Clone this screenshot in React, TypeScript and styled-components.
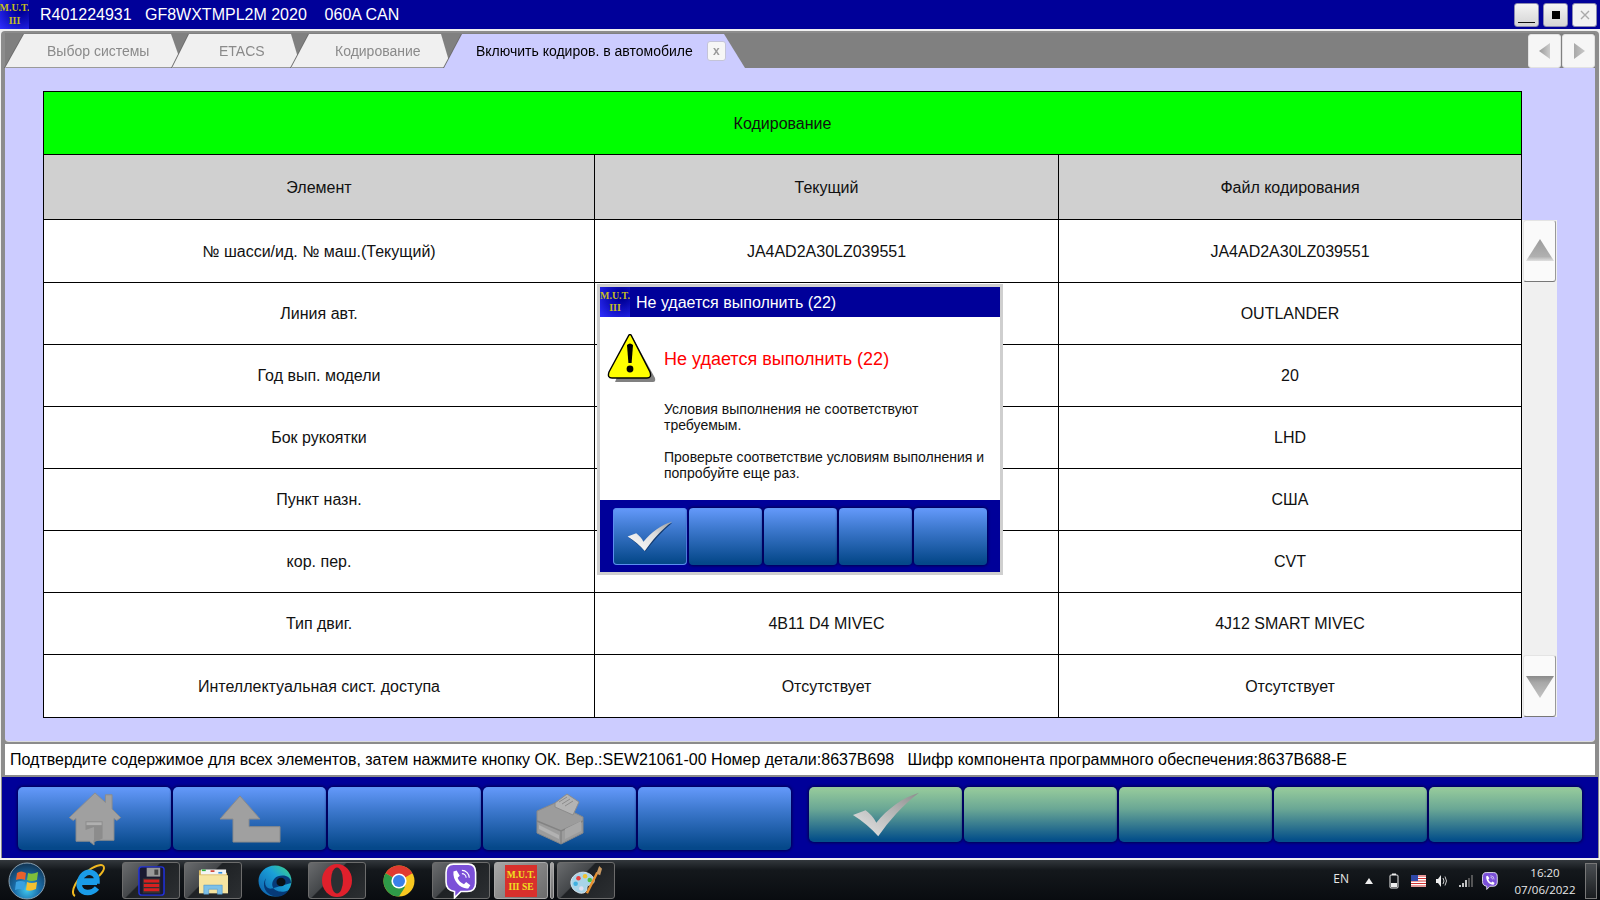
import React from "react";
import styled, { createGlobalStyle } from "styled-components";

const Global = createGlobalStyle`
  html, body { margin: 0; padding: 0; background: #f0f0f0; }
  body { font-family: "Liberation Sans", Arial, sans-serif; overflow: hidden; }
  * { box-sizing: border-box; }
`;

const Page = styled.div`
  position: relative;
  width: 1600px;
  height: 900px;
  display: flex;
  flex-direction: column;
  overflow: hidden;
  background: #f0f0f0;
`;

const TitleBar = styled.header`
  height: 29px;
  flex: none;
  display: flex;
  align-items: center;
  background: #000099;
  color: #fff;
  font-size: 16px;
  padding-right: 3px;
`;
const LogoBox = styled.div<{ $w: number; $h: number; $fs: number }>`
  width: ${(p) => p.$w}px;
  height: ${(p) => p.$h}px;
  flex: none;
  display: flex;
  flex-direction: column;
  align-items: center;
  justify-content: center;
  background: radial-gradient(circle at 72% 30%, #000099 15%, #1414c8 55%, #3030ff 100%);
  color: #c4bc22;
  font-family: "Liberation Serif", serif;
  font-weight: 700;
  font-size: ${(p) => p.$fs}px;
  line-height: 1.25;
  white-space: nowrap;
  overflow: hidden;
`;
const TitleText = styled.span`
  margin-left: 11px;
  white-space: pre;
`;
const WindowButtons = styled.div`
  margin-left: auto;
  display: flex;
  gap: 4px;
  padding-top: 1px;
`;
const WindowButton = styled.div<{ $dim?: boolean }>`
  width: 25px;
  height: 24px;
  border-radius: 3px;
  border: 1px solid #8a8ab0;
  background: ${(p) => (p.$dim ? "#f2f2f2" : "linear-gradient(#f4f4f4, #d4d4d4)")};
  display: flex;
  align-items: center;
  justify-content: center;
`;
const MinGlyph = styled.div`
  width: 17px;
  height: 1px;
  margin-top: 15px;
  background: #111;
`;
const MaxGlyph = styled.div`
  width: 8px;
  height: 8px;
  background: #000;
`;

const Frame = styled.div`
  flex: 1;
  min-height: 0;
  margin: 2px 1px 0;
  padding-top: 2px;
  display: flex;
  flex-direction: column;
  border-radius: 4px 4px 0 0;
  background: #8c8c8c;
`;
const Panel = styled.div`
  flex: 1;
  min-height: 0;
  margin: 0 4px;
  display: flex;
  flex-direction: column;
  border-radius: 0 0 4px 4px;
  background: #ccccff;
  box-shadow: 0 1px 0 #dcdcdc;
`;
const TabBar = styled.nav`
  height: 35px;
  flex: none;
  display: flex;
  background: #808080;
  padding-top: 1px;
`;
const Tab = styled.div<{ $w: number; $ml: number; $z: number }>`
  width: ${(p) => p.$w}px;
  margin-left: ${(p) => p.$ml}px;
  z-index: ${(p) => p.$z};
  flex: none;
  filter: drop-shadow(-1px 0 0 #6a6a6a);
`;
const TabFace = styled.div<{ $active?: boolean; $tl: number; $tr: number; $pl: number }>`
  height: 100%;
  display: flex;
  align-items: center;
  padding-left: ${(p) => p.$pl}px;
  background: ${(p) => (p.$active ? "#ccccff" : "#f0f0f0")};
  border-bottom: ${(p) => (p.$active ? "0" : "1px solid #9a9a9a")};
  color: ${(p) => (p.$active ? "#000" : "#8a8a8a")};
  font-size: 14px;
  white-space: nowrap;
  clip-path: polygon(
    ${(p) => p.$tl}px 0,
    calc(100% - ${(p) => p.$tr}px) 0,
    100% 100%,
    0 100%
  );
`;
const TabClose = styled.div`
  width: 19px;
  height: 20px;
  margin-left: 14px;
  border: 1px solid #c4c4d8;
  border-radius: 3px;
  background: #f6f6f6;
  color: #9a9a9a;
  font-size: 12px;
  font-weight: 700;
  display: flex;
  align-items: center;
  justify-content: center;
`;
const TabNav = styled.div`
  margin-left: auto;
  display: flex;
  gap: 1px;
`;
const TabNavButton = styled.div`
  width: 33px;
  height: 34px;
  border-radius: 3px;
  background: #f6f6f6;
  border: 1px solid #e2e2e2;
  display: flex;
  align-items: center;
  justify-content: center;
`;

const Content = styled.main`
  flex: 1;
  min-height: 0;
  display: flex;
  align-items: flex-start;
  padding: 23px 0 0 38px;
`;
const Table = styled.table`
  width: 1478px;
  flex: none;
  border-collapse: collapse;
  table-layout: fixed;
  background: #fff;
  font-size: 16px;
  color: #111;
  td, th {
    border: 1px solid #000;
    padding: 0;
    text-align: center;
    font-weight: 400;
  }
`;
const GreenCell = styled.th`
  background: #00ff00;
`;
const HeadCell = styled.th`
  background: #d0d0d0;
`;
const Row = styled.tr<{ $h: number; $nudge?: boolean }>`
  height: ${(p) => p.$h}px;
  td, th {
    padding-top: ${(p) => (p.$nudge ? 2 : 0)}px;
  }
`;
const ScrollBar = styled.div`
  width: 35px;
  height: 497px;
  margin-top: 129px;
  flex: none;
  background: #f0f0f0;
  display: flex;
  flex-direction: column;
  justify-content: space-between;
`;
const ScrollButton = styled.div`
  height: 62px;
  width: 33px;
  margin-left: 1px;
  background: #fafafa;
  border: 1px solid #e4e4e4;
  border-bottom: 1px solid #777;
  border-right: 1px solid #999;
  border-radius: 3px;
  display: flex;
  justify-content: center;
`;

const StatusBar = styled.div`
  height: 31px;
  flex: none;
  display: flex;
  align-items: center;
  margin: 3px 4px 2px;
  padding-left: 5px;
  background: #fff;
  color: #000;
  font-size: 16px;
  white-space: pre;
`;
const ActionBar = styled.div`
  height: 81px;
  flex: none;
  display: flex;
  justify-content: space-between;
  margin: 0 1px;
  padding: 10px 16px 0 16px;
  background: #000099;
`;
const ActionGroup = styled.div`
  display: flex;
  gap: 2px;
  align-items: flex-start;
`;
const ActionButton = styled.div<{ $green?: boolean }>`
  width: 153px;
  height: ${(p) => (p.$green ? 55 : 63)}px;
  border-radius: 5px;
  background: ${(p) =>
    p.$green
      ? "linear-gradient(#94c99b 4%, #6aa795 40%, #05508a 96%)"
      : "linear-gradient(#6096f6 4%, #3f7ad0 35%, #05488a 96%)"};
  box-shadow: 0 0 3px 1px #000050;
  display: flex;
  align-items: center;
  justify-content: center;
`;

const Dialog = styled.section`
  position: absolute;
  left: 597px;
  top: 284px;
  width: 406px;
  height: 291px;
  border: 3px solid #cfcfcf;
  background: #fff;
  display: flex;
  flex-direction: column;
`;
const DialogHead = styled.div`
  height: 30px;
  flex: none;
  display: flex;
  align-items: center;
  gap: 6px;
  background: #000099;
  color: #fff;
  font-size: 16px;
`;
const HeadLabel = styled.span`
  padding-top: 1px;
`;
const DialogBody = styled.div`
  flex: 1;
  min-height: 0;
  display: flex;
  flex-direction: column;
  padding: 18px 10px 0 7px;
`;
const DialogTop = styled.div`
  display: flex;
  align-items: center;
  gap: 7px;
  height: 48px;
`;
const DialogTitle = styled.div`
  color: #ff0000;
  font-size: 18px;
  padding-top: 1px;
`;
const DialogText = styled.p`
  margin: 0 0 16px 57px;
  color: #111;
  font-size: 14px;
  line-height: 16px;
  &:first-of-type { margin-top: 18px; }
`;
const DialogFoot = styled.div`
  height: 72px;
  flex: none;
  display: flex;
  gap: 2px;
  padding: 8px 0 0 13px;
  background: #000099;
`;
const DialogButton = styled.div<{ $on?: boolean }>`
  width: ${(p) => (p.$on ? 74 : 73)}px;
  height: 57px;
  border-radius: 4px;
  background: linear-gradient(#6096f6 4%, #3f7ad0 35%, #05488a 96%);
  box-shadow: ${(p) => (p.$on ? "inset 0 0 0 1px #5c8ef0" : "0 0 3px 1px #000050")};
  display: flex;
  align-items: center;
  justify-content: center;
`;

const Taskbar = styled.footer`
  height: 40px;
  flex: none;
  margin-top: 2px;
  display: flex;
  align-items: stretch;
  background: linear-gradient(#33383d 0, #14181c 25%, #090c10 100%);
  color: #e8e8e8;
  padding: 2px 3px 1px 0;
`;
const Orb = styled.div`
  width: 54px;
  flex: none;
  display: flex;
  align-items: center;
  justify-content: center;
`;
const TaskSlot = styled.div<{ $w: number; $ml?: number; $boxed?: boolean; $active?: boolean }>`
  width: ${(p) => p.$w}px;
  margin-left: ${(p) => p.$ml ?? 0}px;
  flex: none;
  display: flex;
  align-items: center;
  justify-content: center;
  border-radius: 3px;
  ${(p) =>
    p.$boxed
      ? `border: 1px solid ${p.$active ? "#a8a8a8" : "#6c6c6c"};
         background: ${
           p.$active
             ? "linear-gradient(135deg,#a8a8a8 0,#8a8a8a 45%,#6a6a6a 100%)"
             : "linear-gradient(135deg,#6a6c6e 0,#44474a 40%,#1e2124 42%,#2c2f32 100%)"
         };`
      : ""}
`;
const MutIcon = styled.div`
  width: 32px;
  height: 32px;
  background: #d8302c;
  color: #f0e020;
  font-family: "Liberation Serif", serif;
  font-weight: 700;
  font-size: 9.5px;
  line-height: 12px;
  text-align: center;
  white-space: nowrap;
  display: flex;
  flex-direction: column;
  justify-content: center;
`;
const Tray = styled.div`
  margin-left: auto;
  display: flex;
  align-items: center;
  font-family: "Open Sans", "Liberation Sans", sans-serif;
  font-size: 11.5px;
`;
const TrayLabel = styled.span`
  margin-right: 8px;
  margin-bottom: 4px;
  font-size: 12px;
`;
const TrayIcon = styled.div<{ $w: number }>`
  width: ${(p) => p.$w}px;
  flex: none;
  display: flex;
  justify-content: center;
`;
const Clock = styled.div`
  width: 76px;
  margin-left: 4px;
  text-align: center;
  line-height: 17px;
`;
const ShowDesktop = styled.div`
  width: 12px;
  height: 36px;
  margin-left: 2px;
  background: linear-gradient(#4a4e52, #1a1d20);
  border: 1px solid #777;
`;

const Check = ({ w, h, bright }: { w: number; h: number; bright?: boolean }) => {
  const id = bright ? "chkB" : "chkG";
  return (
    <svg width={w} height={h} viewBox="0 0 70 48">
      <defs>
        <linearGradient id={id} x1="0" y1="1" x2="1" y2="0">
          <stop offset="0" stopColor={bright ? "#ffffff" : "#e8e8e8"} />
          <stop offset=".6" stopColor={bright ? "#dcdcdc" : "#b4b4b4"} />
          <stop offset="1" stopColor={bright ? "#9c9c9c" : "#8c8c8c"} />
        </linearGradient>
      </defs>
      {bright && <path d="M3 26 L15 21 C19 24 24 29 26 34 C37 20 53 8 69 3 C53 16 39 32 28 47 C21 40 12 32 3 26Z" fill="#123a70" />}
      <path d="M1 24 L14 19 C18 22 23 27 25 32 C36 18 52 6 69 1 C52 14 38 30 27 46 C20 38 11 30 1 24Z" fill={`url(#${id})`} />
    </svg>
  );
};
const HomeIcon = () => (
  <svg width="54" height="55" viewBox="0 0 56 58">
    <path d="M28 2 L39 12 V4 H46 V19 L55 28 L51 31 L48 29 V52 H27 V57 L22 53 H8 V29 L5 31 L1 28Z" fill="#a0a0a0" stroke="#8c8c8c" />
    <path d="M18 32 H36 V50 L27 54 V38 L18 41Z" fill="#8c8c8c" />
    <path d="M19 33 H35 V36 H19Z" fill="#b0b0b0" />
  </svg>
);
const BackIcon = () => (
  <svg width="62" height="48" viewBox="0 0 62 50" preserveAspectRatio="none">
    <path d="M21 1 L41 25 H30 V33 H61 V49 H14 V25 H1Z" fill="#a0a0a0" stroke="#8a8a8a" />
  </svg>
);
const PrinterIcon = () => (
  <svg width="50" height="52" viewBox="0 0 50 52">
    <path d="M2 18 L20 10 L48 24 V40 L26 51 L2 40Z" fill="#9c9c9c" stroke="#888" />
    <path d="M20 10 L32 1 L44 9 L38 22 L20 14Z" fill="#b4b4b4" stroke="#8c8c8c" />
    <path d="M24 9 L32 4 M27 11 L35 6 M30 13 L38 8" stroke="#8c8c8c" />
    <path d="M2 28 L26 38 L48 28 M26 38 V51" stroke="#838383" fill="none" strokeWidth="1.4" />
    <path d="M4 32 L24 42 V46 L4 36Z" fill="#b2b2b2" />
    <path d="M30 36 L46 28 V38 L30 46Z" fill="#a8a8a8" />
  </svg>
);
const Warning = () => (
  <svg width="50" height="50" viewBox="0 0 50 50">
    <path d="M26 4 L48 44 Q49 48 46 48 H8 Z" fill="#808080" />
    <path d="M22 1 Q23 0 24 1 L43 38 Q45 44 40 44 H5 Q0 44 2 38Z" fill="#ffff00" stroke="#000" strokeWidth="1.4" />
    <path d="M20 11 Q23 8 26 11 L24.6 29 H21.4Z" fill="#000" />
    <circle cx="23" cy="35" r="3.4" fill="#000" />
  </svg>
);
const TriLeft = () => (
  <svg width="12" height="16" viewBox="0 0 12 16">
    <defs>
      <linearGradient id="triL" x1="0" x2="1" y1="0" y2="0">
        <stop offset="0" stopColor="#9a9a9a" />
        <stop offset="1" stopColor="#cccccc" />
      </linearGradient>
    </defs>
    <path d="M11 0 V16 L0 8Z" fill="url(#triL)" />
  </svg>
);
const TriRight = () => (
  <svg width="12" height="16" viewBox="0 0 12 16">
    <defs>
      <linearGradient id="triR" x1="0" x2="1" y1="0" y2="0">
        <stop offset="0" stopColor="#a8a8a8" />
        <stop offset="1" stopColor="#c8c8c8" />
      </linearGradient>
    </defs>
    <path d="M1 0 V16 L12 8Z" fill="url(#triR)" />
  </svg>
);
const ScrollUp = () => (
  <svg width="30" height="26" viewBox="0 0 30 26" style={{ marginTop: 16 }}>
    <defs>
      <linearGradient id="su" x1="0" x2="0" y1="0" y2="1">
        <stop offset="0" stopColor="#9c9c9c" />
        <stop offset=".8" stopColor="#b0b0b0" />
        <stop offset="1" stopColor="#e0e0e0" />
      </linearGradient>
    </defs>
    <path d="M15 2 L29 24 H1Z" fill="url(#su)" />
  </svg>
);
const ScrollDown = () => (
  <svg width="30" height="26" viewBox="0 0 30 26" style={{ marginTop: 18 }}>
    <defs>
      <linearGradient id="sd" x1="0" x2="0" y1="0" y2="1">
        <stop offset="0" stopColor="#8a8a8a" />
        <stop offset=".3" stopColor="#a8a8a8" />
        <stop offset="1" stopColor="#c4c4c4" />
      </linearGradient>
    </defs>
    <path d="M1 2 H29 L15 24Z" fill="url(#sd)" />
  </svg>
);

const WinOrb = () => (
  <svg width="38" height="38" viewBox="0 0 38 38">
    <defs>
      <radialGradient id="orb" cx=".5" cy=".75" r=".7">
        <stop offset="0" stopColor="#40c8f0" />
        <stop offset=".5" stopColor="#1a6ca8" />
        <stop offset="1" stopColor="#123a5c" />
      </radialGradient>
    </defs>
    <circle cx="19" cy="19" r="18" fill="url(#orb)" stroke="#8aa0b0" />
    <path d="M9 11 Q13 8 18 11 L17 18 Q13 16 8 18Z" fill="#e8612c" />
    <path d="M20 11 Q24 13 30 10 L29 18 Q23 20 19 18Z" fill="#7fbf3a" />
    <path d="M8 20 Q12 18 17 20 L16 28 Q12 26 7 28Z" fill="#3aa0e0" />
    <path d="M19 20 Q23 22 29 20 L28 27 Q22 30 18 28Z" fill="#f4c030" />
  </svg>
);
const IEIcon = () => (
  <svg width="34" height="36" viewBox="0 0 34 36">
    <path d="M4 33 C-2 30 6 14 18 7 C26 2 33 0 33 5 C33 8 30 11 28 13" fill="none" stroke="#f0b820" strokeWidth="2" />
    <path d="M9 18 H26 C26 10 19 8 15 10 C9 13 7 21 9 25 C12 31 21 31 26 25" fill="none" stroke="#1a9ce8" strokeWidth="5.5" />
    <path d="M10 20 H26" stroke="#1a9ce8" strokeWidth="4" />
  </svg>
);
const FloppyIcon = () => (
  <svg width="27" height="30" viewBox="0 0 28 34" preserveAspectRatio="none">
    <rect x="1" y="1" width="26" height="32" rx="3" fill="#1a1a30" stroke="#2030d8" strokeWidth="1.6" />
    <rect x="9" y="2" width="14" height="10" fill="#9a9a9a" />
    <rect x="17" y="4" width="4" height="6" fill="#444" />
    <rect x="5" y="14" width="18" height="17" fill="#333" />
    <path d="M6 17 H22 M6 22 H22 M6 27 H22" stroke="#d82020" strokeWidth="3.4" />
  </svg>
);
const FolderIcon = () => (
  <svg width="31" height="28" viewBox="0 0 32 34" preserveAspectRatio="none">
    <path d="M1 4 H13 L15 7 H30 V31 H1Z" fill="#d8b860" />
    <rect x="3" y="3" width="26" height="6" fill="#f4f4f4" />
    <rect x="4" y="3" width="4" height="2" fill="#30b040" />
    <rect x="13" y="4" width="4" height="2" fill="#d04030" />
    <rect x="21" y="6" width="4" height="2" fill="#3090e0" />
    <path d="M1 10 H31 V32 H1Z" fill="#f6e4a0" />
    <path d="M6 33 V22 H25 V33 H20 V27 H11 V33Z" fill="#7cc0e8" stroke="#4a90c8" strokeWidth=".6" />
  </svg>
);
const EdgeIcon = () => (
  <svg width="34" height="34" viewBox="0 0 34 36" preserveAspectRatio="none">
    <defs>
      <linearGradient id="edg" x1="0" y1="1" x2="1" y2="0">
        <stop offset="0" stopColor="#0c5aa8" />
        <stop offset=".6" stopColor="#1aa0d8" />
        <stop offset="1" stopColor="#40d880" />
      </linearGradient>
    </defs>
    <circle cx="17" cy="18" r="16.5" fill="url(#edg)" />
    <path d="M33 20 C33 12 25 11 20 13 C15 15 13 21 15 25 C17 29 24 31 30 28 C26 36 16 36 10 31 C5 26 5 19 8 15 C5 23 10 27 14 26" fill="#063a78" />
    <circle cx="23" cy="19" r="4.5" fill="#0b1015" />
  </svg>
);
const OperaIcon = () => (
  <svg width="30" height="33" viewBox="0 0 30 33">
    <ellipse cx="15" cy="16.5" rx="15" ry="16.5" fill="#e0202c" />
    <ellipse cx="15" cy="16.5" rx="6" ry="13" fill="#2c2f32" />
  </svg>
);
const ChromeIcon = () => (
  <svg width="32" height="32" viewBox="0 0 32 32">
    <circle cx="16" cy="16" r="15.5" fill="#f8c820" />
    <path d="M16 16 L2.6 8.2 A15.5 15.5 0 0 1 29.4 8.2Z" fill="#e03a30" />
    <path d="M16 16 L2.6 8.2 A15.5 15.5 0 0 0 16 31.5 L22 22Z" fill="#2e9a48" />
    <circle cx="16" cy="16" r="7.6" fill="#fff" />
    <circle cx="16" cy="16" r="6" fill="#3a80e8" />
  </svg>
);
const ViberIcon = ({ s }: { s: number }) => (
  <svg width={s * 0.88} height={s} viewBox="0 0 30 34">
    <path d="M8 1 H22 Q29 1 29 9 V19 Q29 27 21 27 H15 L9 33 V27 Q1 26 1 18 V9 Q1 1 8 1Z" fill="#7b50d8" stroke="#fff" strokeWidth="1.5" />
    <path d="M8 8 L11 7 L14 12 L12 14 C13 17 15 19 18 20 L20 18 L24 21 L22 24 C15 25 7 17 8 8Z" fill="#fff" />
    <path d="M16 7 A7 7 0 0 1 23 14 M16 10 A4 4 0 0 1 20 14" fill="none" stroke="#fff" strokeWidth="1.1" />
  </svg>
);
const PaletteIcon = () => (
  <svg width="34" height="32" viewBox="0 0 36 34">
    <path d="M2 20 C1 12 10 6 18 8 C26 10 29 17 25 20 C21 22 19 21 19 25 C19 30 13 31 9 29 C5 27 3 25 2 20Z" fill="#a8d4e8" stroke="#dce8f0" />
    <circle cx="10" cy="14" r="2.4" fill="#e84040" />
    <circle cx="17" cy="12" r="2.4" fill="#f0c030" />
    <circle cx="7" cy="20" r="2.4" fill="#40b0e0" />
    <circle cx="22" cy="16" r="2.4" fill="#50c040" />
    <circle cx="13" cy="25" r="2.4" fill="#e0e0f0" />
    <path d="M19 30 L30 8" stroke="#e89030" strokeWidth="2.6" />
    <path d="M29 9 L32 1 L35 4 L33 11Z" fill="#c89860" />
  </svg>
);
const BatteryIcon = () => (
  <svg width="10" height="16" viewBox="0 0 10 16">
    <rect x="1" y="2" width="8" height="13" rx="1" fill="none" stroke="#eee" />
    <rect x="3" y="0.5" width="4" height="1.5" fill="#eee" />
    <rect x="2" y="10" width="6" height="4" fill="#eee" />
  </svg>
);
const FlagIcon = () => (
  <svg width="15" height="12" viewBox="0 0 15 12">
    <rect width="15" height="12" fill="#fff" />
    <path d="M0 1 H15 M0 3.5 H15 M0 6 H15 M0 8.5 H15 M0 11 H15" stroke="#d03030" />
    <rect width="7" height="6" fill="#3048a8" />
  </svg>
);
const SpeakerIcon = () => (
  <svg width="14" height="14" viewBox="0 0 14 14">
    <path d="M1 5 H3 L6 1 V13 L3 9 H1Z" fill="#eee" />
    <path d="M8 4 Q10 7 8 10 M10 2.5 Q13 7 10 11.5" fill="none" stroke="#ccc" />
  </svg>
);
const SignalIcon = () => (
  <svg width="14" height="12" viewBox="0 0 14 12">
    <path d="M1 10 V12 M4 8 V12 M7 5 V12" stroke="#eee" strokeWidth="1.6" />
    <path d="M10 3 V12 M13 0 V12" stroke="#666" strokeWidth="1.6" />
  </svg>
);

const rows: [string, string, string, number, boolean][] = [
  ["№ шасси/ид. № маш.(Текущий)", "JA4AD2A30LZ039551", "JA4AD2A30LZ039551", 63, true],
  ["Линия авт.", "", "OUTLANDER", 62, false],
  ["Год вып. модели", "", "20", 62, false],
  ["Бок рукоятки", "", "LHD", 62, false],
  ["Пункт назн.", "", "США", 62, false],
  ["кор. пер.", "", "CVT", 62, false],
  ["Тип двиг.", "4B11 D4 MIVEC", "4J12 SMART MIVEC", 62, false],
  ["Интеллектуальная сист. доступа", "Отсутствует", "Отсутствует", 63, true],
];

export default function App() {
  return (
    <Page>
      <Global />
      <TitleBar>
        <LogoBox $w={29} $h={29} $fs={10}>
          <span>M.U.T.</span>
          <span>III</span>
        </LogoBox>
        <TitleText>{"R401224931   GF8WXTMPL2M 2020    060A CAN"}</TitleText>
        <WindowButtons>
          <WindowButton><MinGlyph /></WindowButton>
          <WindowButton><MaxGlyph /></WindowButton>
          <WindowButton $dim>
            <svg width="10" height="10" viewBox="0 0 10 10"><path d="M1 1 L9 9 M9 1 L1 9" stroke="#aaa" strokeWidth="1.4" /></svg>
          </WindowButton>
        </WindowButtons>
      </TitleBar>
      <Frame>
        <Panel>
          <TabBar>
            <Tab $w={178} $ml={0} $z={1}><TabFace $tl={19} $tr={12} $pl={42}>Выбор системы</TabFace></Tab>
            <Tab $w={129} $ml={-11} $z={2}><TabFace $tl={17} $tr={10} $pl={47}>ETACS</TabFace></Tab>
            <Tab $w={160} $ml={-10} $z={3}><TabFace $tl={18} $tr={10} $pl={44}>Кодирование</TabFace></Tab>
            <Tab $w={301} $ml={-7} $z={4}>
              <TabFace $active $tl={18} $tr={21} $pl={32}>
                Включить кодиров. в автомобиле
                <TabClose>x</TabClose>
              </TabFace>
            </Tab>
            <TabNav>
              <TabNavButton><TriLeft /></TabNavButton>
              <TabNavButton><TriRight /></TabNavButton>
            </TabNav>
          </TabBar>
          <Content>
            <Table>
              <colgroup>
                <col style={{ width: 551 }} />
                <col style={{ width: 464 }} />
                <col style={{ width: 463 }} />
              </colgroup>
              <tbody>
                <Row $h={63} $nudge><GreenCell colSpan={3}>Кодирование</GreenCell></Row>
                <Row $h={65} $nudge>
                  <HeadCell>Элемент</HeadCell>
                  <HeadCell>Текущий</HeadCell>
                  <HeadCell>Файл кодирования</HeadCell>
                </Row>
                {rows.map(([a, b, c, h, n]) => (
                  <Row $h={h} $nudge={n} key={a}>
                    <td>{a}</td>
                    <td>{b}</td>
                    <td>{c}</td>
                  </Row>
                ))}
              </tbody>
            </Table>
            <ScrollBar>
              <ScrollButton><ScrollUp /></ScrollButton>
              <ScrollButton><ScrollDown /></ScrollButton>
            </ScrollBar>
          </Content>
        </Panel>
        <StatusBar>
          {"Подтвердите содержимое для всех элементов, затем нажмите кнопку ОК. Вер.:SEW21061-00 Номер детали:8637B698   Шифр компонента программного обеспечения:8637B688-E"}
        </StatusBar>
        <ActionBar>
          <ActionGroup>
            <ActionButton><HomeIcon /></ActionButton>
            <ActionButton><BackIcon /></ActionButton>
            <ActionButton />
            <ActionButton><PrinterIcon /></ActionButton>
            <ActionButton />
          </ActionGroup>
          <ActionGroup>
            <ActionButton $green><Check w={68} h={48} /></ActionButton>
            <ActionButton $green />
            <ActionButton $green />
            <ActionButton $green />
            <ActionButton $green />
          </ActionGroup>
        </ActionBar>
      </Frame>
      <Taskbar>
        <Orb><WinOrb /></Orb>
        <TaskSlot $w={68}><IEIcon /></TaskSlot>
        <TaskSlot $w={58} $boxed><FloppyIcon /></TaskSlot>
        <TaskSlot $w={58} $ml={4} $boxed><FolderIcon /></TaskSlot>
        <TaskSlot $w={66}><EdgeIcon /></TaskSlot>
        <TaskSlot $w={58} $boxed><OperaIcon /></TaskSlot>
        <TaskSlot $w={66}><ChromeIcon /></TaskSlot>
        <TaskSlot $w={58} $boxed><ViberIcon s={36} /></TaskSlot>
        <TaskSlot $w={54} $ml={4} $boxed $active>
          <MutIcon><span>M.U.T.</span><span>III SE</span></MutIcon>
        </TaskSlot>
        <TaskSlot $w={4} $ml={2} $boxed $active />
        <TaskSlot $w={58} $ml={3} $boxed><PaletteIcon /></TaskSlot>
        <Tray>
          <TrayLabel>EN</TrayLabel>
          <TrayIcon $w={24}>
            <svg width="8" height="6" viewBox="0 0 8 6"><path d="M4 0 L8 6 H0Z" fill="#eee" /></svg>
          </TrayIcon>
          <TrayIcon $w={25}><BatteryIcon /></TrayIcon>
          <TrayIcon $w={24}><FlagIcon /></TrayIcon>
          <TrayIcon $w={24}><SpeakerIcon /></TrayIcon>
          <TrayIcon $w={23}><SignalIcon /></TrayIcon>
          <TrayIcon $w={26}><ViberIcon s={18} /></TrayIcon>
          <Clock>16:20<br />07/06/2022</Clock>
          <ShowDesktop />
        </Tray>
      </Taskbar>
      <Dialog>
        <DialogHead>
          <LogoBox $w={30} $h={30} $fs={10}>
            <span>M.U.T.</span>
            <span>III</span>
          </LogoBox>
          <HeadLabel>Не удается выполнить (22)</HeadLabel>
        </DialogHead>
        <DialogBody>
          <DialogTop>
            <Warning />
            <DialogTitle>Не удается выполнить (22)</DialogTitle>
          </DialogTop>
          <DialogText>Условия выполнения не соответствуют<br />требуемым.</DialogText>
          <DialogText>Проверьте соответствие условиям выполнения и<br />попробуйте еще раз.</DialogText>
        </DialogBody>
        <DialogFoot>
          <DialogButton $on><Check w={46} h={33} bright /></DialogButton>
          <DialogButton />
          <DialogButton />
          <DialogButton />
          <DialogButton />
        </DialogFoot>
      </Dialog>
    </Page>
  );
}
